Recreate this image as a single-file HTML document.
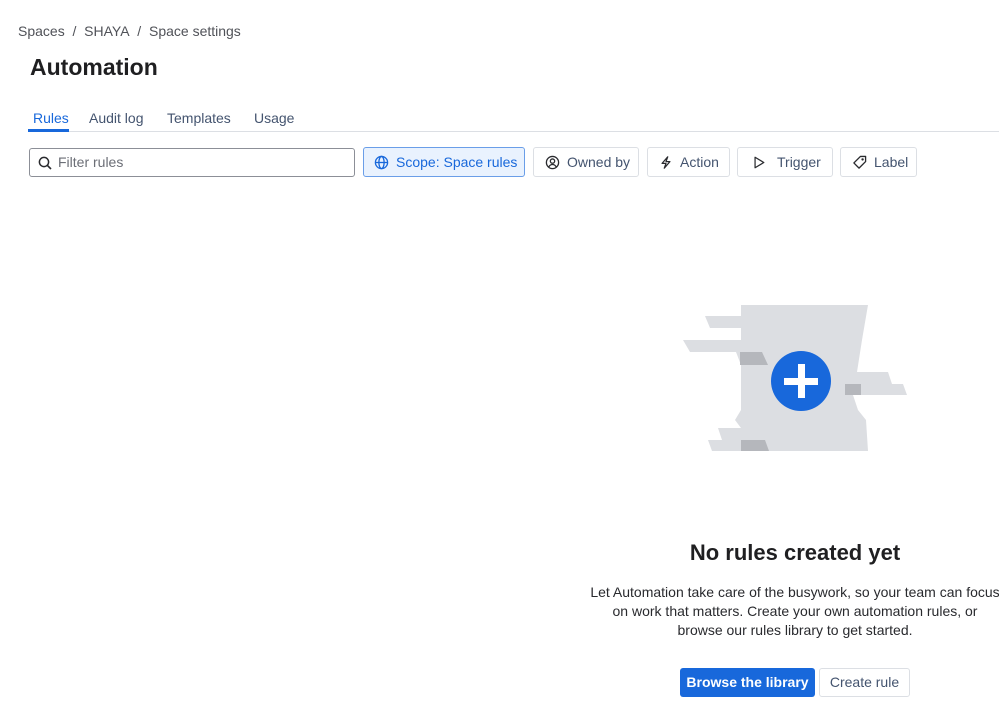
<!DOCTYPE html>
<html><head><meta charset="utf-8"><style>
*{box-sizing:border-box;margin:0;padding:0}
body{width:999px;height:725px;background:#fff;font-family:"Liberation Sans",sans-serif;color:#292a2e;position:relative;overflow:hidden}
.a{position:absolute;white-space:nowrap}
.btn{position:absolute;top:147px;height:30px;border:1px solid #dcdfe4;border-radius:3px;font-size:14px;color:#44546f;display:flex;align-items:center;padding-left:11px;gap:7px}
.btn svg{flex:none}
</style></head><body>
<div class="a" style="left:18px;top:23px;font-size:14px;color:#505258">Spaces&nbsp;&nbsp;/&nbsp;&nbsp;SHAYA&nbsp;&nbsp;/&nbsp;&nbsp;Space settings</div>
<div class="a" style="left:30px;top:54px;font-size:23px;font-weight:bold;color:#1f1f21">Automation</div>
<div class="a" style="left:33px;top:110px;font-size:14px;color:#1868db">Rules</div>
<div class="a" style="left:89px;top:110px;font-size:14px;color:#44546f">Audit log</div>
<div class="a" style="left:167px;top:110px;font-size:14px;color:#44546f">Templates</div>
<div class="a" style="left:254px;top:110px;font-size:14px;color:#44546f">Usage</div>
<div class="a" style="left:28px;top:131px;width:971px;height:1px;background:#dcdfe4"></div>
<div class="a" style="left:28px;top:129px;width:41px;height:3px;background:#1868db"></div>
<div class="a" style="left:29px;top:148px;width:326px;height:29px;border:1px solid #8c8f97;border-radius:3px;font-size:14px;color:#6b6e76;padding:5px 0 0 28px">Filter rules
<svg style="position:absolute;left:8px;top:7px" width="14" height="14" viewBox="0 0 14 14"><circle cx="6" cy="6" r="4.6" fill="none" stroke="#292a2e" stroke-width="1.5"/><path d="M9.4 9.4L13 13" stroke="#292a2e" stroke-width="1.6"/></svg></div>
<div class="btn" style="left:363px;width:162px;background:#e9f2fe;border-color:#6a9ee8;color:#1868db;padding-left:10px"><svg width="15" height="15" viewBox="0 0 16 16" fill="none" stroke="#1868db" stroke-width="1.4"><circle cx="8" cy="8" r="6.5"/><ellipse cx="8" cy="8" rx="2.8" ry="6.5"/><path d="M1.5 8h13"/></svg>Scope: Space rules</div>
<div class="btn" style="left:533px;width:106px"><svg width="15" height="15" viewBox="0 0 16 16" fill="none" stroke="#292a2e" stroke-width="1.4"><circle cx="8" cy="8" r="6.5"/><circle cx="8" cy="6.5" r="2.3"/><path d="M4 12.8c1-2 2.5-2.7 4-2.7s3 .7 4 2.7"/></svg>Owned by</div>
<div class="btn" style="left:647px;width:83px"><svg width="14" height="15" viewBox="0 0 16 16" fill="none" stroke="#292a2e" stroke-width="1.4" stroke-linejoin="round"><path d="M10 1.5L3.5 9h4.5l-2 5.5L12.5 7H8z"/></svg>Action</div>
<div class="btn" style="left:737px;width:96px;gap:11px;padding-left:14px"><svg width="14" height="15" viewBox="0 0 16 16" fill="none" stroke="#292a2e" stroke-width="1.4" stroke-linejoin="round"><path d="M3.5 2v12l10-6z"/></svg>Trigger</div>
<div class="btn" style="left:840px;width:77px"><svg width="15" height="15" viewBox="0 0 16 16" fill="none" stroke="#292a2e" stroke-width="1.4" stroke-linejoin="round"><path d="M9 1.5h5.5V7l-7 7L2 8.5z"/><circle cx="11.3" cy="4.7" r=".6" fill="#292a2e"/></svg>Label</div>

<svg class="a" style="left:0;top:0" width="999" height="725">
<g fill="#dcdee2">
<polygon points="741,305 868,305 862,340 857,372 852,392 858,410 866,420 868,451 741,451 741,428 735,420 741,410 741,365 736,352 741,340"/>
<polygon points="705,316 760,316 765,328 710,328"/>
<polygon points="683,340 760,340 765,352 690,352"/>
<polygon points="843,372 888,372 892,384 903,384 907,395 843,395"/>
<polygon points="718,428 745,428 745,440 722,440"/>
<polygon points="708,440 745,440 745,451 712,451"/>
</g>
<g fill="#b5b7bc">
<polygon points="740,352 762,352 768,365 740,365"/>
<polygon points="845,384 861,384 861,395 845,395"/>
<polygon points="741,440 765,440 769,451 741,451"/>
</g>
<circle cx="801" cy="381" r="30" fill="#1868db"/>
<rect x="784" y="378" width="34" height="7" fill="#fff"/>
<rect x="798" y="364" width="7" height="34" fill="#fff"/>
</svg>

<div class="a" style="left:590px;width:410px;top:540px;text-align:center;font-size:22px;font-weight:bold;color:#1f1f21">No rules created yet</div>
<div class="a" style="left:580px;width:430px;top:583px;text-align:center;font-size:14px;line-height:19px;color:#292a2e">Let Automation take care of the busywork, so your team can focus<br>on work that matters. Create your own automation rules, or<br>browse our rules library to get started.</div>
<div class="a" style="left:680px;top:668px;width:135px;height:29px;background:#1868db;border-radius:3px;color:#fff;font-size:14px;font-weight:bold;text-align:center;line-height:29px">Browse the library</div>
<div class="a" style="left:819px;top:668px;width:91px;height:29px;border:1px solid #dcdfe4;border-radius:3px;color:#44546f;font-size:14px;text-align:center;line-height:27px">Create rule</div>
</body></html>
